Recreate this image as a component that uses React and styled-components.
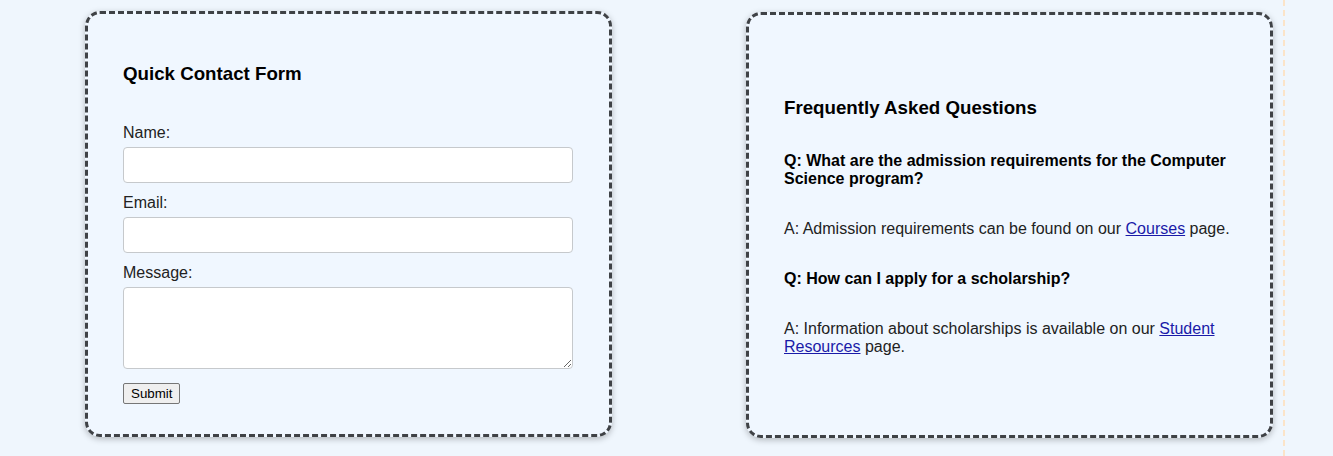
import styled, { createGlobalStyle } from "styled-components"

const GlobalStyle = createGlobalStyle`
  body {
    margin: 0;
    background-color: #eff6fd;
    font-family: "Liberation Sans", Arial, sans-serif;
    font-size: 16px;
    color: #222;
  }
`

const Page = styled.div`
  width: 1285px;
  min-height: 456px;
  box-sizing: border-box;
  border-right: 2px dashed #fbe4c9;
  padding: 11px 0 0 85px;
  display: flex;
  align-items: flex-start;
  gap: 134px;
`

const Card = styled.section`
  width: 527px;
  height: 426px;
  box-sizing: border-box;
  margin-top: ${(p) => p.$offset || 0}px;
  padding: 0 36px 0 35px;
  background-color: #f0f7ff;
  border: 3px dashed #3f4246;
  border-radius: 15px;
  box-shadow: 0 2px 6px rgba(0, 0, 0, 0.25);
  display: flex;
  flex-direction: column;
  justify-content: center;
`

const Title = styled.h3`
  font-size: 18.72px;
  font-weight: bold;
  color: #000;
  margin: 18.72px 0 ${(p) => p.$gap || 18.72}px;
`

const Form = styled.form`
  margin-top: 20px;
  display: flex;
  flex-direction: column;
`

const Label = styled.label`
  display: block;
  margin-bottom: 5px;
`

const Field = styled.input`
  display: block;
  width: 100%;
  height: 36px;
  box-sizing: border-box;
  margin: 0 0 10.8px;
  padding: 8px;
  background: #fff;
  border: 1px solid #c6c9cc;
  border-radius: 4px;
  font-family: inherit;
  font-size: 16px;
`

const MessageBox = styled.textarea`
  display: block;
  width: 100%;
  height: 82px;
  box-sizing: border-box;
  margin: 0 0 14px;
  padding: 8px;
  background: #fff;
  border: 1px solid #c6c9cc;
  border-radius: 4px;
  font-family: inherit;
  font-size: 16px;
  resize: vertical;
`

const SubmitButton = styled.button`
  align-self: flex-start;
  height: 21px;
  padding: 1px 7px;
  background: #efefef;
  border: 1px solid #767676;
  border-radius: 2px;
  font-family: "Liberation Sans", Arial, sans-serif;
  font-size: 13.33px;
  color: #000;
`

const Question = styled.p`
  margin: 16px 0;
  font-weight: bold;
  color: #000;
`

const Answer = styled.p`
  margin: 16px 0;
`

const Link = styled.a`
  color: #1a1aa8;
  text-decoration: underline;
`

function ContactForm() {
  return (
    <Card>
      <Title>Quick Contact Form</Title>
      <Form onSubmit={(e) => e.preventDefault()}>
        <Label htmlFor="name">Name:</Label>
        <Field id="name" type="text" />
        <Label htmlFor="email">Email:</Label>
        <Field id="email" type="email" />
        <Label htmlFor="message">Message:</Label>
        <MessageBox id="message" />
        <SubmitButton type="submit">Submit</SubmitButton>
      </Form>
    </Card>
  )
}

function Faq() {
  return (
    <Card $offset={1}>
      <Title $gap={17}>Frequently Asked Questions</Title>
      <Question>
        Q: What are the admission requirements for the Computer Science
        program?
      </Question>
      <Answer>
        A: Admission requirements can be found on our{" "}
        <Link href="#courses">Courses</Link> page.
      </Answer>
      <Question>Q: How can I apply for a scholarship?</Question>
      <Answer>
        A: Information about scholarships is available on our{" "}
        <Link href="#resources">Student Resources</Link> page.
      </Answer>
    </Card>
  )
}

export default function App() {
  return (
    <>
      <GlobalStyle />
      <Page>
        <ContactForm />
        <Faq />
      </Page>
    </>
  )
}
